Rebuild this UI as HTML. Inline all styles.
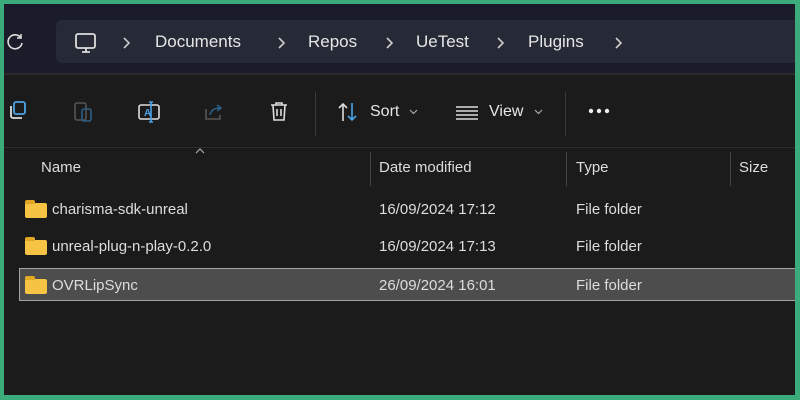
<!DOCTYPE html>
<html><head><style>
body{margin:0;width:800px;height:400px;overflow:hidden;background:#3bab7c;font-family:"Liberation Sans",sans-serif}
#w{position:absolute;left:4px;top:4px;width:791px;height:391px;background:#1b1b1b;overflow:hidden}
#top{position:absolute;left:0;top:0;width:791px;height:69px;background:#1a1d29}
#bc{position:absolute;left:52px;top:16px;width:739px;height:43px;background:#262a36;border-radius:6px 0 0 6px}
.t{position:absolute;color:#e6e6e6;white-space:nowrap}
.bc{font-size:17px;top:28px}
.ch{position:absolute;top:33px}
#line{position:absolute;left:0;top:69px;width:791px;height:2px;background:#2a2a2a}
.sep{position:absolute;width:1px;background:#3a3a3a}
.h{font-size:15px;top:155px;color:#ddd}
.r{font-size:15px;color:#ddd}
.fold{position:absolute;width:22px;height:15px;background:#f6c344;border-radius:2px}
.fold:before{content:"";position:absolute;left:0;top:-3px;width:10px;height:4px;background:#e2a824;border-radius:2px 2px 0 0}
.dd{position:absolute}
</style></head><body><div id="w">
<div id="top"></div>
<div id="bc"></div>
<svg style="position:absolute;left:3px;top:29px" width="18" height="18" viewBox="0 0 18 18"><path d="M14 5A7 7 0 1 0 15 10" fill="none" stroke="#ddd" stroke-width="1.6"/><path d="M14 1v4h-4" fill="none" stroke="#ddd" stroke-width="1.6"/></svg>
<svg style="position:absolute;left:70px;top:28px" width="24" height="22" viewBox="0 0 24 22"><rect x="2" y="2" width="19" height="14" rx="2" fill="none" stroke="#ddd" stroke-width="1.8"/><path d="M8 20h8M12 16v4" stroke="#ddd" stroke-width="1.8"/></svg>
<svg class="ch" style="left:118px" width="10" height="12"><path d="M2 1l5 5-5 5" fill="none" stroke="#ccc" stroke-width="1.6"/></svg>
<div class="t bc" style="left:151px">Documents</div>
<svg class="ch" style="left:273px" width="10" height="12"><path d="M2 1l5 5-5 5" fill="none" stroke="#ccc" stroke-width="1.6"/></svg>
<div class="t bc" style="left:304px">Repos</div>
<svg class="ch" style="left:381px" width="10" height="12"><path d="M2 1l5 5-5 5" fill="none" stroke="#ccc" stroke-width="1.6"/></svg>
<div class="t bc" style="left:412px">UeTest</div>
<svg class="ch" style="left:492px" width="10" height="12"><path d="M2 1l5 5-5 5" fill="none" stroke="#ccc" stroke-width="1.6"/></svg>
<div class="t bc" style="left:524px">Plugins</div>
<svg class="ch" style="left:610px" width="10" height="12"><path d="M2 1l5 5-5 5" fill="none" stroke="#ccc" stroke-width="1.6"/></svg>
<div id="line"></div>
<svg style="position:absolute;left:3px;top:97px" width="20" height="20"><rect x="7" y="1" width="11" height="12" rx="2" fill="none" stroke="#4aa3e8" stroke-width="1.8"/><path d="M4 5v10a2 2 0 0 0 2 2h9" fill="none" stroke="#ddd" stroke-width="1.8"/></svg>
<svg style="position:absolute;left:69px;top:96px" width="22" height="24"><rect x="2" y="3" width="11" height="17" rx="2" fill="none" stroke="#555" stroke-width="1.6"/><rect x="9" y="9" width="9" height="12" rx="2" fill="none" stroke="#2e5f85" stroke-width="1.6"/></svg>
<svg style="position:absolute;left:133px;top:96px" width="26" height="24"><rect x="2" y="5" width="20" height="14" rx="2" fill="none" stroke="#ddd" stroke-width="1.6"/><text x="7" y="16" font-size="10" font-weight="bold" fill="#4aa3e8" font-family="Liberation Sans">A</text><path d="M14 2v20M12 2h4M12 22h4" stroke="#4aa3e8" stroke-width="1.6"/></svg>
<svg style="position:absolute;left:199px;top:97px" width="22" height="22"><path d="M3 8v10h14v-4" fill="none" stroke="#555" stroke-width="1.6"/><path d="M7 14c1-5 5-7 10-7M14 4l4 3-4 3" fill="none" stroke="#2e5f85" stroke-width="1.6"/></svg>
<svg style="position:absolute;left:264px;top:96px" width="22" height="24"><path d="M3 5h16M8 5V3h6v2M5 5l1 15h10l1-15M9 9v7M13 9v7" fill="none" stroke="#ddd" stroke-width="1.6"/></svg>
<div class="sep" style="left:311px;top:88px;height:44px"></div>
<svg style="position:absolute;left:333px;top:97px" width="24" height="22"><path d="M6 20V3M2 7l4-4 4 4" fill="none" stroke="#ddd" stroke-width="1.6"/><path d="M15 2v17M11 15l4 4 4-4" fill="none" stroke="#4aa3e8" stroke-width="1.6"/></svg>
<div class="t" style="left:366px;top:99px;font-size:16px">Sort</div>
<svg class="dd" style="left:405px;top:105px" width="9" height="6"><path d="M1 1l3.5 3.5L8 1" fill="none" stroke="#aaa" stroke-width="1.2"/></svg>
<svg style="position:absolute;left:452px;top:101px" width="24" height="16"><path d="M0 2h22M0 6h22M0 10h22M0 14h22" stroke="#ddd" stroke-width="1.5"/></svg>
<div class="t" style="left:485px;top:99px;font-size:16px">View</div>
<svg class="dd" style="left:530px;top:105px" width="9" height="6"><path d="M1 1l3.5 3.5L8 1" fill="none" stroke="#aaa" stroke-width="1.2"/></svg>
<div class="sep" style="left:561px;top:88px;height:44px"></div>
<svg style="position:absolute;left:584px;top:104px" width="24" height="6"><circle cx="3" cy="3" r="2.2" fill="#eee"/><circle cx="11" cy="3" r="2.2" fill="#eee"/><circle cx="19" cy="3" r="2.2" fill="#eee"/></svg>
<div style="position:absolute;left:0;top:143px;width:791px;height:1px;background:#2d2d2d"></div>
<svg style="position:absolute;left:191px;top:144px" width="10" height="6"><path d="M1 5l4-4 4 4" fill="none" stroke="#aaa" stroke-width="1.2"/></svg>
<div class="t h" style="left:37px">Name</div>
<div class="sep" style="left:366px;top:148px;height:34px;background:#444"></div>
<div class="t h" style="left:375px">Date modified</div>
<div class="sep" style="left:562px;top:148px;height:34px;background:#444"></div>
<div class="t h" style="left:572px">Type</div>
<div class="sep" style="left:726px;top:148px;height:34px;background:#444"></div>
<div class="t h" style="left:735px">Size</div>
<div style="position:absolute;left:15px;top:264px;width:776px;height:31px;background:#4d4d4d;border:1px solid #a5a5a5;border-right:none"></div>
<div class="fold" style="left:21px;top:199px"></div>
<div class="t r" style="left:48px;top:197px">charisma-sdk-unreal</div>
<div class="t r" style="left:375px;top:197px">16/09/2024 17:12</div>
<div class="t r" style="left:572px;top:197px">File folder</div>
<div class="fold" style="left:21px;top:236px"></div>
<div class="t r" style="left:48px;top:234px">unreal-plug-n-play-0.2.0</div>
<div class="t r" style="left:375px;top:234px">16/09/2024 17:13</div>
<div class="t r" style="left:572px;top:234px">File folder</div>
<div class="fold" style="left:21px;top:275px"></div>
<div class="t r" style="left:48px;top:273px">OVRLipSync</div>
<div class="t r" style="left:375px;top:273px">26/09/2024 16:01</div>
<div class="t r" style="left:572px;top:273px">File folder</div>
</div></body></html>
